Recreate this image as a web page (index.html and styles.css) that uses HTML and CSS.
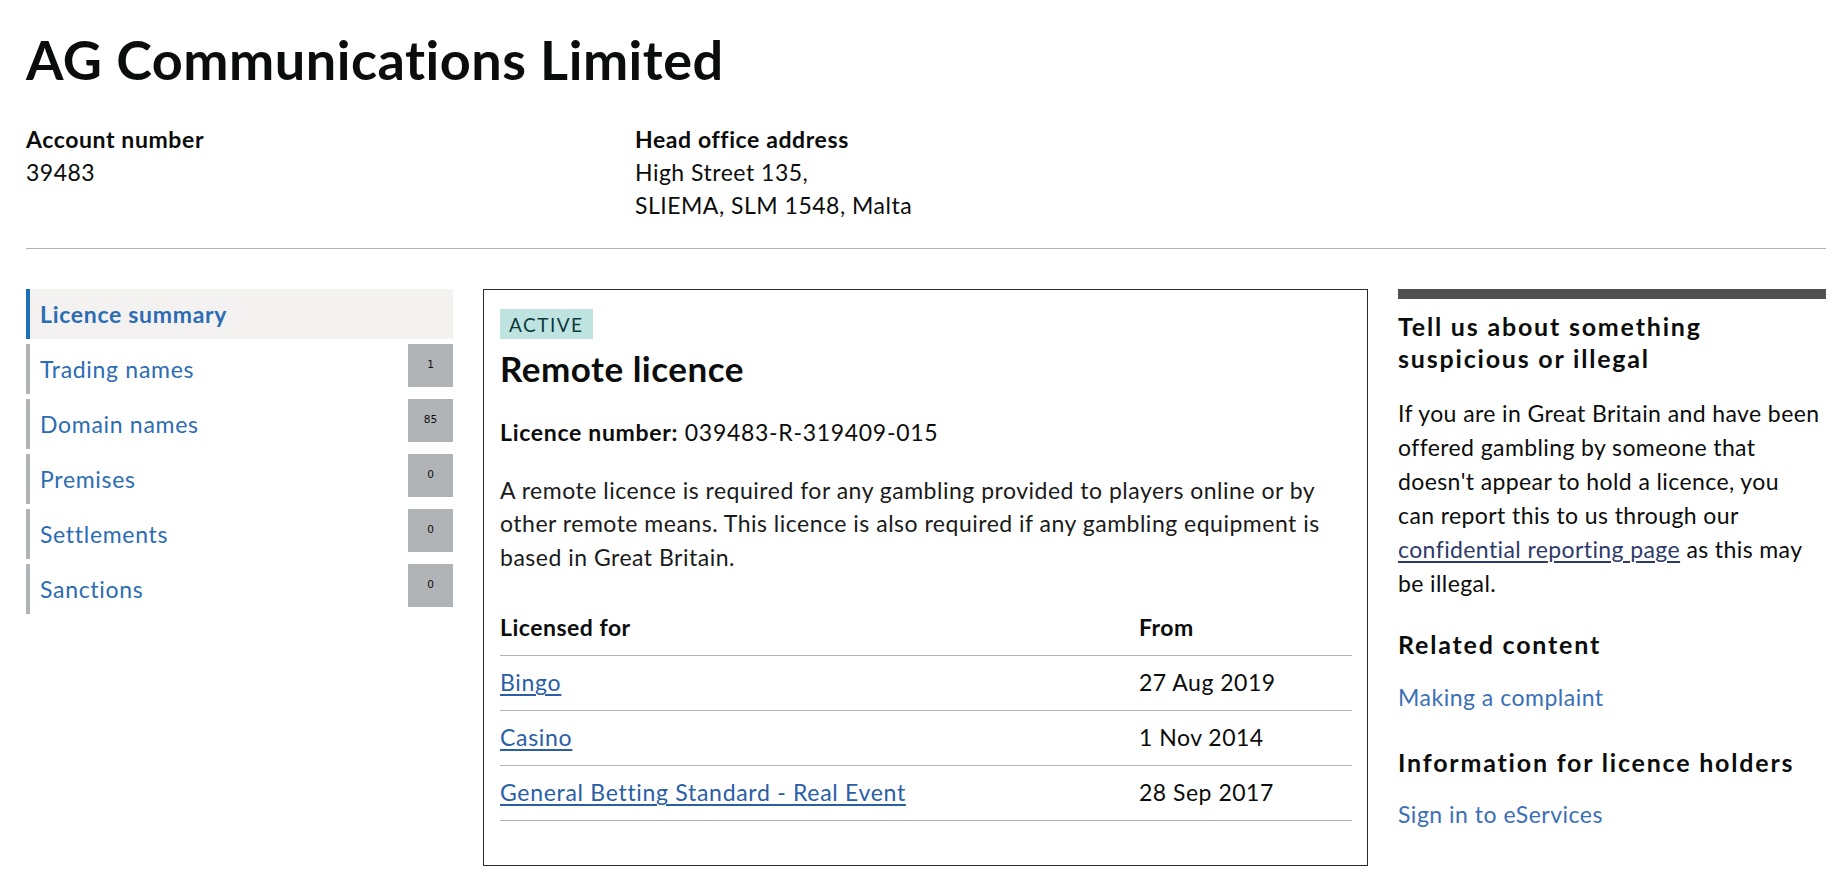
FILE: index.html
```html
<!DOCTYPE html>
<html lang="en">
<head>
<meta charset="utf-8">
<title>AG Communications Limited</title>
<link rel="stylesheet" href="styles.css">
</head>
<body>
<div class="page">
  <header class="org">
    <h1 class="org-title">AG Communications Limited</h1>
    <dl class="org-meta">
      <div class="meta-item">
        <dt>Account number</dt>
        <dd>39483</dd>
      </div>
      <div class="meta-item">
        <dt>Head office address</dt>
        <dd>High Street 135,<br>SLIEMA, SLM 1548, Malta</dd>
      </div>
    </dl>
  </header>
  <hr class="divider">
  <div class="layout">
    <nav class="side-nav">
      <ul class="nav-list">
        <li class="nav-item is-active"><a class="nav-link" href="#">Licence summary</a></li>
        <li class="nav-item"><a class="nav-link" href="#">Trading names</a><span class="nav-count">1</span></li>
        <li class="nav-item"><a class="nav-link" href="#">Domain names</a><span class="nav-count">85</span></li>
        <li class="nav-item"><a class="nav-link" href="#">Premises</a><span class="nav-count">0</span></li>
        <li class="nav-item"><a class="nav-link" href="#">Settlements</a><span class="nav-count">0</span></li>
        <li class="nav-item"><a class="nav-link" href="#">Sanctions</a><span class="nav-count">0</span></li>
      </ul>
    </nav>
    <main class="licence-card">
      <span class="status-tag">Active</span>
      <h2 class="card-title">Remote licence</h2>
      <p class="licence-number"><strong>Licence number:</strong> 039483-R-319409-015</p>
      <p class="card-text">A remote licence is required for any gambling provided to players online or by other remote means. This licence is also required if any gambling equipment is based in Great Britain.</p>
      <table class="licence-table">
        <thead>
          <tr><th class="col-activity">Licensed for</th><th class="col-date">From</th></tr>
        </thead>
        <tbody>
          <tr><td><a href="#">Bingo</a></td><td>27 Aug 2019</td></tr>
          <tr><td><a href="#">Casino</a></td><td>1 Nov 2014</td></tr>
          <tr><td><a href="#">General Betting Standard - Real Event</a></td><td>28 Sep 2017</td></tr>
        </tbody>
      </table>
    </main>
    <aside class="related">
      <h2 class="related-title">Tell us about something suspicious or illegal</h2>
      <p class="related-text">If you are in Great Britain and have been offered gambling by someone that doesn't appear to hold a licence, you<br>can report this to us through our <a class="inline-link" href="#">confidential reporting page</a> as this may be illegal.</p>
      <h2 class="related-title related-sub">Related content</h2>
      <a class="related-link" href="#">Making a complaint</a>
      <h2 class="related-title related-sub-2">Information for licence holders</h2>
      <a class="related-link related-link-last" href="#">Sign in to eServices</a>
    </aside>
  </div>
</div>
</body>
</html>
```
FILE: styles.css
```css
* { box-sizing: border-box; }

body {
  margin: 0;
  font-family: Lato, "Noto Sans", sans-serif;
  font-size: 23px;
  letter-spacing: 0.5px;
  line-height: 33px;
  color: #0b0c0c;
  background: #ffffff;
}

.page {
  width: 1826px;
  padding-left: 26px;
}

.org-title {
  font-family: Lato, sans-serif;
  font-weight: 700;
  font-size: 54px;
  line-height: 1.2;
  letter-spacing: 0.5px;
  margin: 28px 0 30px;
}

.org-meta {
  display: grid;
  grid-template-columns: 609px 1fr;
  margin: 0;
}

.org-meta dt { font-weight: 700; letter-spacing: 0.6px; }
.org-meta dd { margin: 0; }

.divider {
  border: 0;
  border-top: 1px solid #b1b4b6;
  height: 0;
  margin: 26px 0 40px;
}

.layout {
  display: grid;
  grid-template-columns: 427px 885px 428px;
  column-gap: 30px;
  align-items: start;
}

/* side navigation */
.nav-list {
  list-style: none;
  margin: 0;
  padding: 0;
  display: flex;
  flex-direction: column;
  gap: 5px;
}

.nav-item {
  display: flex;
  justify-content: space-between;
  align-items: flex-start;
  height: 50px;
  border-left: 4px solid #b1b4b6;
}

.nav-item.is-active {
  border-left-color: #1d70b8;
  background: #f3f2f1;
}

.nav-link {
  padding-left: 10px;
  line-height: 50px;
  letter-spacing: 0.7px;
  color: #2b6cb3;
  text-decoration: none;
}

.nav-item.is-active .nav-link { font-weight: 700; }

.nav-count {
  width: 45px;
  height: 43px;
  background: #b1b4b6;
  font-family: "DejaVu Sans", sans-serif;
  font-size: 10.5px;
  letter-spacing: 0;
  line-height: 40px;
  text-align: center;
  color: #0b0c0c;
}

/* licence card */
.licence-card {
  border: 1px solid #2b2b2b;
  padding: 19px 15px 16px 16px;
}

.status-tag {
  display: block;
  width: fit-content;
  height: 30px;
  padding: 0 9px;
  background: #bfe3e0;
  color: #0c3a3a;
  font-family: Lato, sans-serif;
  font-size: 19px;
  line-height: 31px;
  letter-spacing: 1.5px;
  text-transform: uppercase;
}

.card-title {
  font-family: Lato, sans-serif;
  font-weight: 700;
  font-size: 35px;
  line-height: 42px;
  letter-spacing: 0.5px;
  margin: 8px 0 0;
}

.licence-number { margin: 27px 0 0; letter-spacing: 0.7px; }

.card-text {
  margin: 25px 0 0;
  line-height: 33.5px;
  color: #1a1a1a;
}

.licence-table {
  width: 100%;
  border-collapse: collapse;
  margin: 27px 0 28px;
}

.licence-table th,
.licence-table td {
  text-align: left;
  vertical-align: top;
  padding: 10px 20px 11px 0;
  border-bottom: 1px solid #b1b4b6;
  line-height: 33px;
}

.licence-table th { font-weight: 700; }
.col-activity { width: 75%; }

.licence-table a {
  color: #2a5ea6;
  letter-spacing: 0.7px;
  text-decoration: underline;
  text-decoration-thickness: 2px;
  text-underline-offset: 3px;
}

/* related aside */
.related {
  border-top: 10px solid #505050;
  padding-top: 11px;
}

.related-title {
  font-family: Lato, sans-serif;
  font-weight: 700;
  font-size: 25px;
  line-height: 32px;
  letter-spacing: 1.8px;
  margin: 0;
}

.related-text {
  margin: 22px 0 0;
  line-height: 34px;
  letter-spacing: 0.4px;
}

.inline-link {
  color: #2e3a6a;
  text-decoration: underline;
  text-underline-offset: 3px;
}

.related-sub { margin-top: 28px; }
.related-sub-2 { margin-top: 32px; }

.related-link {
  display: block;
  margin-top: 20px;
  line-height: 34px;
  color: #3a6fb7;
  text-decoration: none;
}

.related-link-last { margin-top: 19px; }
```
